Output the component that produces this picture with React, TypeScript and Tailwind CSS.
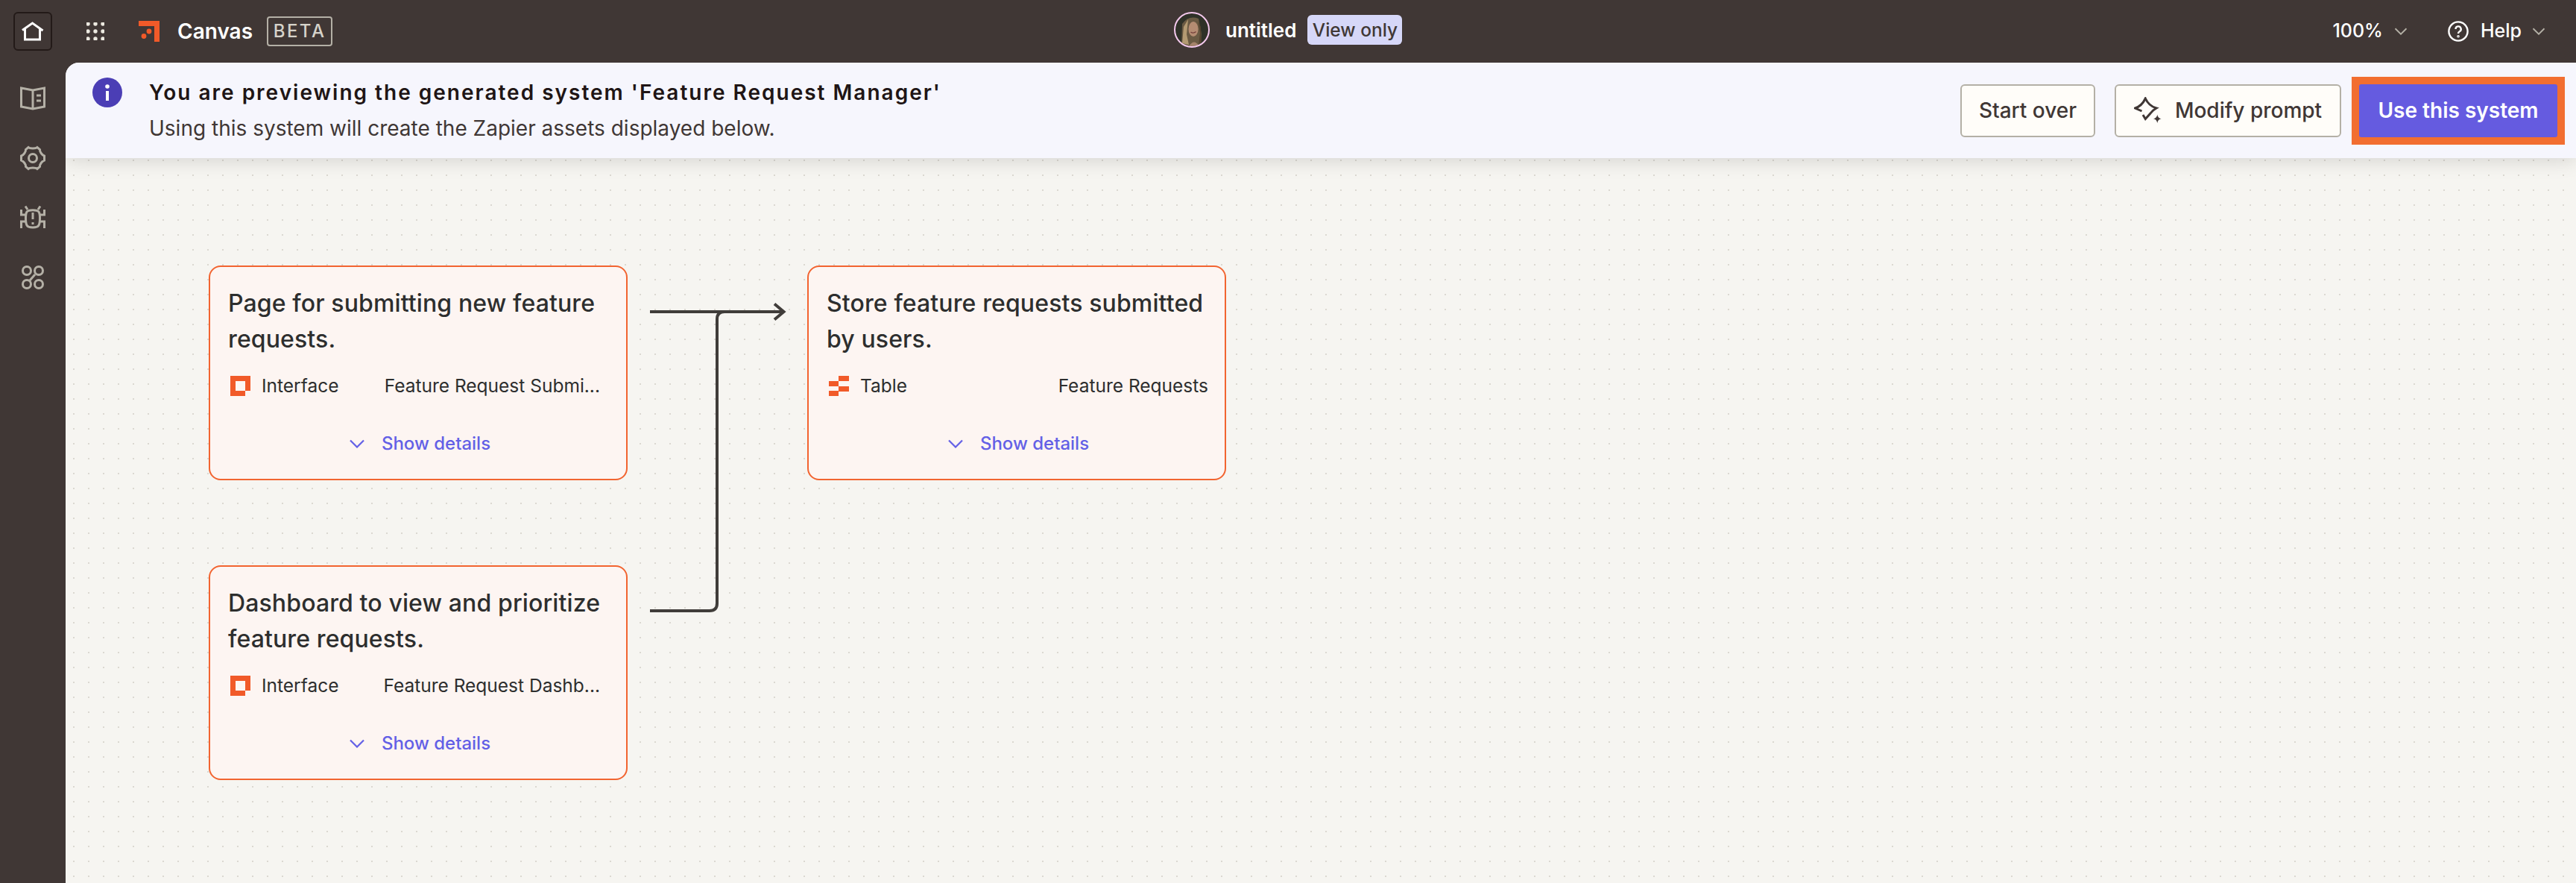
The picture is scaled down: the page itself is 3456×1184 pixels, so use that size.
const Chevron = ({ className }: { className: string }) => (
  <svg viewBox="0 0 20 12" fill="none" stroke="currentColor" strokeWidth="2.200" className={className}>
    <path d="M1 1.500 10 10.500l9-9" />
  </svg>
);

const InterfaceIcon = () => (
  <svg viewBox="0 0 27 27" className="h-[27px] w-[27px] shrink-0">
    <path d="M0 0h27v20h-7v7H0z M7 7v13h13V7z" fill="#f15a29" fillRule="evenodd" />
  </svg>
);

const TableIcon = () => (
  <svg viewBox="0 0 27 27" className="h-[27px] w-[27px] shrink-0">
    <path d="M13 0h14v7H13z M0 7h13v7H0z M13 14h14v7H13z M0 20h13v7H0z" fill="#f15a29" />
  </svg>
);

const nodes = [
  {
    title: "Page for submitting new feature requests.",
    kind: "Interface",
    name: "Feature Request Submi...",
    className: "left-[192px] top-[272px]",
    nameClass: "mr-[13px]",
    icon: <InterfaceIcon />,
  },
  {
    title: "Store feature requests submitted by users.",
    kind: "Table",
    name: "Feature Requests",
    className: "left-[995px] top-[272px]",
    nameClass: "",
    icon: <TableIcon />,
  },
  {
    title: "Dashboard to view and prioritize feature requests.",
    kind: "Interface",
    name: "Feature Request Dashb...",
    className: "left-[192px] top-[674px]",
    nameClass: "mr-[13px]",
    icon: <InterfaceIcon />,
  },
];

const Node = ({ title, kind, name, icon, className, nameClass }: (typeof nodes)[number]) => (
  <div
    className={`absolute flex h-[288px] w-[562px] flex-col rounded-[16px] border-[2px] border-[#f26430] bg-[#fdf5f2] pl-[24px] pr-[22px] pt-[25px] ${className}`}
  >
    <p className="h-[96px] text-[32px] font-medium leading-[48px] tracking-[0.12px] text-[#2d2e2e]">{title}</p>
    <div className="mt-[25px] flex h-[27px] items-center justify-between">
      <div className="flex items-center gap-[15px] pl-[3px]">
        {icon}
        <span className="text-[24.500px] text-[#2d2e2e]">{kind}</span>
      </div>
      <span className={`text-[24.500px] text-[#2d2e2e] ${nameClass}`}>{name}</span>
    </div>
    <div className="mt-[46px] flex items-center justify-center gap-[23px] pl-[3px] text-[24px] font-medium text-[#6360e6]">
      <Chevron className="h-[12px] w-[20px]" />
      <span>Show details</span>
    </div>
  </div>
);

const SideIcon = ({ children }: { children: React.ReactNode }) => (
  <svg viewBox="0 0 34 34" fill="none" stroke="#b4b0a6" strokeWidth="3" className="h-[34px] w-[34px]">
    {children}
  </svg>
);

export default function App() {
  return (
    <div className="flex h-[1184px] w-[3456px] flex-col overflow-hidden bg-[#403735] font-['Inter',sans-serif]">
      {/* top bar */}
      <header className="relative flex h-[84px] shrink-0 items-center justify-between pl-[18px] pr-[41px] text-white">
        <div className="flex items-center">
          <div className="flex h-[52px] w-[52px] items-center justify-center rounded-[6px] border-[2px] border-[#231a18]">
            <svg viewBox="0 0 32 26" fill="none" stroke="#fff" strokeWidth="3" className="h-[26px] w-[32px]">
              <path d="M2 11.500 15.500 2l14 10" />
              <path d="M5.500 10v14h20V10" />
            </svg>
          </div>
          <svg viewBox="0 0 24 24" fill="#ece9e0" className="ml-[46px] h-[24px] w-[24px]">
            {[2, 12, 22].map((y) =>
              [2, 12, 22].map((x) => <circle key={`${x}-${y}`} cx={x} cy={y} r="2.700" />),
            )}
          </svg>
          <svg viewBox="0 0 28 28" className="ml-[46px] h-[28px] w-[28px]">
            <path d="M0 0h28v28h-7V7H0z" fill="#f15a29" />
            <circle cx="14" cy="14" r="3.400" fill="#f15a29" />
            <circle cx="7" cy="20.500" r="3.400" fill="#f15a29" />
          </svg>
          <span className="ml-[24px] text-[28px] font-semibold">Canvas</span>
          <span className="ml-[19px] flex h-[40px] w-[88px] items-center justify-center rounded-[4px] border-[2px] border-[#b4b0a6] text-[24px] font-medium tracking-[2.500px] text-[#d6d3ca]">
            BETA
          </span>
        </div>

        <div className="absolute left-[1575px] top-[16px] flex items-center">
          <svg viewBox="0 0 48 48" className="h-[48px] w-[48px]">
            <defs>
              <clipPath id="avatar">
                <circle cx="24" cy="24" r="22" />
              </clipPath>
            </defs>
            <g clipPath="url(#avatar)">
              <rect width="48" height="48" fill="#2f3128" />
              <path d="M10 48 11 16Q20 4 33 9L37 30 35 48Z" fill="#6a5a43" />
              <path d="M11 42 13 20 19 10 17 30 20 44Z" fill="#b39a72" />
              <ellipse cx="26" cy="23" rx="6.500" ry="10" fill="#b58c72" />
              <path d="M20 15Q26 8 33 15L30 12H23Z" fill="#5d4c3a" />
              <path d="M19 48Q27 33 35 48Z" fill="#a5836a" />
              <path d="M32 12 35 28 33 44 37 40 36 20Z" fill="#54432f" />
              <path d="M22.500 27q3.500 2.500 7-0.500" stroke="#74403a" strokeWidth="1.400" fill="none" />
            </g>
            <circle cx="24" cy="24" r="23" fill="none" stroke="#f3c8ec" strokeWidth="2" />
          </svg>
          <span className="ml-[21px] text-[26px] font-semibold">untitled</span>
          <span className="ml-[15px] flex h-[40px] w-[127px] items-center justify-center rounded-[6px] bg-[#d6d7f8] text-[24.500px] font-medium text-[#403735]">
            View only
          </span>
        </div>

        <div className="flex items-center">
          <span className="text-[25px] font-medium">100%</span>
          <Chevron className="ml-[15px] h-[10px] w-[18px] text-[#b4b0a6]" />
          <svg viewBox="0 0 28 28" fill="none" stroke="#fff" strokeWidth="2.400" className="ml-[54px] h-[28px] w-[28px]">
            <circle cx="14" cy="14" r="12.600" />
            <path d="M10.500 11a3.600 3.600 0 1 1 5.200 3.200c-1.200.7-1.700 1.400-1.700 2.800" />
            <circle cx="14" cy="20.800" r="0.600" />
          </svg>
          <span className="ml-[16px] text-[25px] font-medium">Help</span>
          <Chevron className="ml-[14px] h-[10px] w-[18px] text-[#b4b0a6]" />
        </div>
      </header>

      <div className="flex min-h-0 flex-1">
        {/* sidebar */}
        <aside className="flex w-[88px] shrink-0 flex-col items-center gap-[46px] pt-[31px]">
          <SideIcon>
            <path d="M1.500 3 17 6l15.500-3v25L17 31 1.500 28z" />
            <path d="M17 6v25M22 13h6M22 20h6" />
          </SideIcon>
          <SideIcon>
            <path d="M11 2.500c2 2 10 2 12 0l3.500 3c-.5 3 3 7.500 6 8.500v6c-3 1-6.500 5.500-6 8.500l-3.500 3c-2-2-10-2-12 0l-3.500-3c.5-3-3-7.500-6-8.500v-6c3-1 6.500-5.500 6-8.500z" />
            <circle cx="17" cy="17" r="5.500" />
          </SideIcon>
          <SideIcon>
            <path d="M9 9c2-3 14-3 16 0 2 3 2 14 0 18-2 4-14 4-16 0-2-4-2-15 0-18z" />
            <path d="M10 6 7 1.500M24 6l3-4.500M1.500 6v7H8M32.500 6v7H26M1.500 31v-9H8M32.500 31v-9H26" />
            <path d="M17 10v9M17 23v3" />
          </SideIcon>
          <SideIcon>
            <circle cx="9" cy="8" r="5.500" />
            <circle cx="25" cy="8" r="5.500" />
            <circle cx="9" cy="26" r="5.500" />
            <circle cx="25" cy="26" r="5.500" />
            <path d="m13 21 7-8" />
          </SideIcon>
        </aside>

        {/* main */}
        <main className="relative min-w-0 flex-1 overflow-hidden rounded-tl-[18px] bg-[#f6f5f1] bg-[radial-gradient(#dbd8d1_1.100px,transparent_1.100px)] bg-[size:20px_20px] bg-[position:1px_1px]">
          <div className="relative z-10 flex h-[128px] items-center justify-between bg-[#f6f6fd] pl-[36px] pr-[15px] shadow-[0_4px_24px_rgba(0,0,0,0.13)]">
            <div className="flex items-start gap-[36px] self-start pt-[20px]">
              <svg viewBox="0 0 40 40" className="h-[40px] w-[40px] shrink-0">
                <circle cx="20" cy="20" r="20" fill="#4b3eb5" />
                <circle cx="20" cy="12" r="2.800" fill="#fff" />
                <rect x="18" y="18" width="4" height="13" fill="#fff" />
              </svg>
              <div className="-mt-[4px]">
                <p className="text-[28px] font-semibold leading-[48px] tracking-[2px] text-[#201515]">
                  You are previewing the generated system 'Feature Request Manager'
                </p>
                <p className="text-[28px] leading-[48px] text-[#403735]">
                  Using this system will create the Zapier assets displayed below.
                </p>
              </div>
            </div>
            <div className="flex items-center">
              <button className="h-[71px] w-[181px] rounded-[6px] border-[2px] border-[#b4b0a6] bg-[#fffdf9] text-[28px] font-medium text-[#403735]">
                Start over
              </button>
              <button className="ml-[26px] flex h-[71px] w-[304px] items-center justify-center gap-[17px] rounded-[6px] border-[2px] border-[#b4b0a6] bg-[#fffdf9] text-[28px] font-medium text-[#403735]">
                <svg viewBox="0 0 38 36" fill="none" className="h-[36px] w-[38px]">
                  <path
                    d="M10.500 19 1.500 15C8 13 12.500 8 15.300 2 18 8 23 13 30 15 26.500 17 24 19 22 22L15.300 29.500 12 24"
                    stroke="#403735"
                    strokeWidth="3"
                  />
                  <path d="M31.300 23.500c.6 3.300 1.800 4.900 5.500 5.800-3.700.9-4.900 2.500-5.500 5.800-.6-3.300-1.800-4.900-5.500-5.800 3.700-.9 4.900-2.500 5.500-5.800z" fill="#403735" />
                </svg>
                Modify prompt
              </button>
              <div className="ml-[14px] h-[91px] w-[286px] bg-[#f26e30] p-[10px]">
                <button className="h-full w-full rounded-[3px] bg-[#655be0] text-[28px] font-semibold text-white">
                  Use this system
                </button>
              </div>
            </div>
          </div>

          {nodes.map((n) => (
            <Node key={n.title} {...n} />
          ))}

          {/* connectors */}
          <svg className="absolute left-0 top-0 h-[1100px] w-[1100px]" fill="none" stroke="#403d3a" strokeWidth="4">
            <path d="M784 334h180M951 323.500 963.500 334 951 344.500" />
            <path d="M784 735h80q10 0 10-10V344q0-10 10-10" />
          </svg>
        </main>
      </div>
    </div>
  );
}
